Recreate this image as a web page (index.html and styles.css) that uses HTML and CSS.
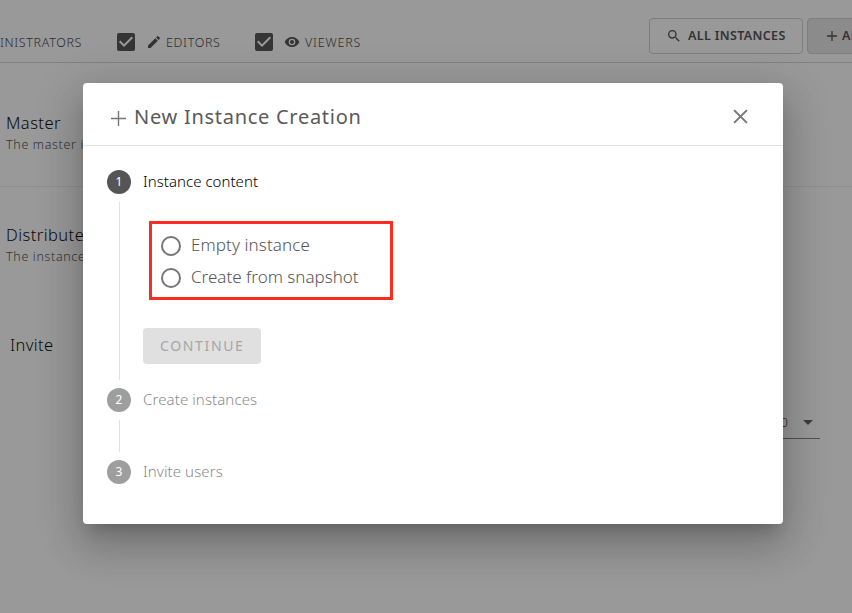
FILE: index.html
```html
<!DOCTYPE html>
<html lang="en">
<head>
<meta charset="utf-8">
<title>New Instance Creation</title>
<link rel="stylesheet" href="styles.css">
</head>
<body>
<div class="page">
  <header class="toolbar">
    <span class="filter filter-admin"><span class="filter-label admin">INISTRATORS</span></span>
    <span class="filter filter-editors">
      <svg class="check" viewBox="3 3 18 18"><path d="M19 3H5a2 2 0 0 0-2 2v14a2 2 0 0 0 2 2h14a2 2 0 0 0 2-2V5a2 2 0 0 0-2-2zm-9 14l-5-5 1.41-1.41L10 14.17l7.59-7.59L19 8l-9 9z"/></svg>
      <svg class="role" viewBox="0 0 24 24"><path d="M3 17.25V21h3.75L17.81 9.94l-3.75-3.75L3 17.25zM20.71 7.04a1 1 0 0 0 0-1.41l-2.34-2.34a1 1 0 0 0-1.41 0l-1.83 1.83 3.75 3.75 1.83-1.83z"/></svg>
      <span class="filter-label editors">EDITORS</span>
    </span>
    <span class="filter filter-viewers">
      <svg class="check" viewBox="3 3 18 18"><path d="M19 3H5a2 2 0 0 0-2 2v14a2 2 0 0 0 2 2h14a2 2 0 0 0 2-2V5a2 2 0 0 0-2-2zm-9 14l-5-5 1.41-1.41L10 14.17l7.59-7.59L19 8l-9 9z"/></svg>
      <svg class="role" viewBox="0 0 24 24"><path d="M12 4.5C7 4.5 2.73 7.61 1 12c1.73 4.39 6 7.5 11 7.5s9.27-3.11 11-7.5c-1.73-4.39-6-7.5-11-7.5zM12 17a5 5 0 1 1 0-10 5 5 0 0 1 0 10zm0-8a3 3 0 1 0 0 6 3 3 0 0 0 0-6z"/></svg>
      <span class="filter-label viewers">VIEWERS</span>
    </span>
    <span class="button button-all">
      <svg class="search" viewBox="3 3 18 18"><path d="M15.5 14h-.79l-.28-.27A6.47 6.47 0 0 0 16 9.5 6.5 6.5 0 1 0 9.5 16c1.61 0 3.09-.59 4.23-1.57l.27.28v.79l5 4.99L20.49 19l-4.99-5zm-6 0a4.5 4.5 0 1 1 0-9 4.5 4.5 0 0 1 0 9z"/></svg>
      <span>ALL INSTANCES</span>
    </span>
    <span class="button button-add">
      <svg class="plus" viewBox="0 0 10 10"><path d="M5 0v10M0 5h10"/></svg>
      <span>ADD</span>
    </span>
  </header>
  <section class="row">
    <h2>Master</h2>
    <p>The master instance</p>
  </section>
  <section class="row row-distributed">
    <h2>Distributed</h2>
    <p>The instances</p>
  </section>
  <section class="invite">
    <h2>Invite</h2>
    <div class="select"><span>10</span><i class="caret"></i></div>
  </section>
</div>

<div class="overlay">
  <div class="dialog">
    <div class="dialog-head">
      <svg class="title-plus" viewBox="0 0 14 14"><path d="M7 0v14M0 7h14"/></svg>
      <h1>New Instance Creation</h1>
      <svg class="close" viewBox="0 0 14 14"><path d="M1 1l12 12M13 1L1 13"/></svg>
    </div>
    <div class="steps">
      <div class="step active"><span class="num">1</span><span class="label l1">Instance content</span></div>
      <div class="step-body">
        <div class="options">
          <div class="option"><i class="radio"></i><span class="o1">Empty instance</span></div>
          <div class="option"><i class="radio"></i><span class="o2">Create from snapshot</span></div>
        </div>
        <div class="continue"><span>CONTINUE</span></div>
      </div>
      <div class="step"><span class="num">2</span><span class="label l2">Create instances</span></div>
      <div class="step-body short"></div>
      <div class="step"><span class="num">3</span><span class="label l3">Invite users</span></div>
    </div>
  </div>
</div>
</body>
</html>
```
FILE: styles.css
```css
* { box-sizing: border-box; }
body {
  margin: 0;
  width: 852px;
  height: 613px;
  overflow: hidden;
  position: relative;
  background: #fff;
  font-family: "Noto Sans", "Open Sans", sans-serif;
  font-weight: 350;
}
svg { display: block; flex: none; }
h1, h2, p { margin: 0; font-weight: 350; white-space: nowrap; }

.page { height: 613px; overflow: hidden; }
.toolbar {
  display: flex;
  align-items: center;
  height: 63px;
  padding-top: 22px;
  border-bottom: 1px solid #d8d8d8;
  color: #4c4c4c;
  font-size: 12.5px;
  line-height: 18px;
  white-space: nowrap;
  overflow: hidden;
}
.filter { display: flex; align-items: center; flex: none; }
.filter-admin { width: 117px; }
.filter-editors { width: 138px; }
.filter-viewers { width: 394px; }
.check { width: 18px; height: 18px; fill: #595959; }
.role { width: 16px; height: 16px; margin: 0 4px 0 11px; fill: #555; }
.filter-label { padding-top: 2px; letter-spacing: .65px; }
.viewers { margin-left: 1px; letter-spacing: .8px; }
.button {
  display: flex;
  align-items: center;
  flex: none;
  height: 36px;
  margin-top: -12px;
  border: 1px solid #d0d0d0;
  border-radius: 4px;
  color: #555;
  font-weight: 600;
  font-size: 12.5px;
  letter-spacing: .35px;
}
.button-all { width: 154px; padding-left: 18px; }
.button-add { width: 100px; margin-left: 4px; padding-left: 19px; background: #e8e8e8; }
.search { width: 12px; height: 12px; margin-right: 8px; fill: #555; }
.plus { width: 10px; height: 10px; margin-right: 5px; fill: none; stroke: #555; stroke-width: 1.3; }

h2 { font-size: 16.5px; line-height: 24px; color: #111; letter-spacing: .45px; }
.row { height: 124px; padding: 48px 0 0 6px; border-bottom: 1px solid #eee; }
.row p { padding-top: 1px; font-size: 12.5px; line-height: 18px; color: #555; letter-spacing: .65px; }
.row-distributed { height: 122px; padding-top: 36px; border: 0; }
.invite { padding: 24px 32px 0 10px; }
.invite h2 { letter-spacing: .35px; }
.select {
  display: flex;
  align-items: center;
  justify-content: flex-end;
  width: 80px;
  height: 33px;
  margin: 49px 0 0 auto;
  border-bottom: 1px solid #888;
  color: #444;
  font-size: 13px;
}
.caret { margin: 0 7px 0 15px; border: 5px solid transparent; border-top-color: #666; border-bottom: 0; }

.overlay { position: absolute; inset: 0; padding: 83px 0 0 83px; background: rgba(0, 0, 0, .4); }
.dialog {
  width: 700px;
  height: 441px;
  border-radius: 4px;
  background: #fff;
  box-shadow: 0 11px 15px -7px rgba(0, 0, 0, .2), 0 24px 38px 3px rgba(0, 0, 0, .14), 0 9px 46px 8px rgba(0, 0, 0, .12);
}
.dialog-head {
  display: flex;
  align-items: center;
  height: 63px;
  padding: 5px 35px 0 28px;
  border-bottom: 1px solid #e0e0e0;
}
.title-plus { width: 15px; height: 15px; margin: 3px 8px 0 0; fill: none; stroke: #757575; stroke-width: 1.3; }
h1 { flex: 1; font-size: 20px; font-weight: 400; line-height: 28px; color: #5a5a5a; letter-spacing: .72px; }
.close { width: 15px; height: 15px; fill: none; stroke: #757575; stroke-width: 1.8; }

.steps { padding: 24px; }
.step { display: flex; align-items: center; height: 24px; color: #8a8a8a; font-size: 15px; letter-spacing: .1px; }
.step.active { color: #000; }
.label { padding-bottom: 2px; }
.l1 { letter-spacing: .04px; }
.num {
  width: 24px;
  height: 24px;
  margin-right: 12px;
  border-radius: 50%;
  background: #9e9e9e;
  color: #fff;
  font-size: 12px;
  font-weight: 400;
  line-height: 24px;
  letter-spacing: 0;
  text-align: center;
}
.active .num { background: #555; }
.step-body {
  height: 178px;
  margin: 8px 0 8px 12px;
  padding: 19px 0 0 29px;
  border-left: 1px solid #e0e0e0;
}
.step-body.short { height: 32px; padding: 0; }
.options {
  width: 244px;
  height: 79px;
  padding: 6px 0 0 9px;
  border: 3px solid #fb2d20;
}
.option { display: flex; align-items: center; height: 32px; color: #555; font-size: 17px; white-space: nowrap; }
.option span { padding-bottom: 3px; }
.o1 { letter-spacing: .1px; }
.o2 { letter-spacing: 0; }
.radio { width: 20px; height: 20px; margin-right: 10px; border: 2px solid #757575; border-radius: 50%; }
.continue {
  width: 118px;
  height: 36px;
  margin: 28px 0 0 -6px;
  border-radius: 4px;
  background: #e0e0e0;
  color: #a6a6a6;
  font-size: 14px;
  font-weight: 400;
  line-height: 36px;
  letter-spacing: 1.65px;
  padding-left: 17px;
}
```
